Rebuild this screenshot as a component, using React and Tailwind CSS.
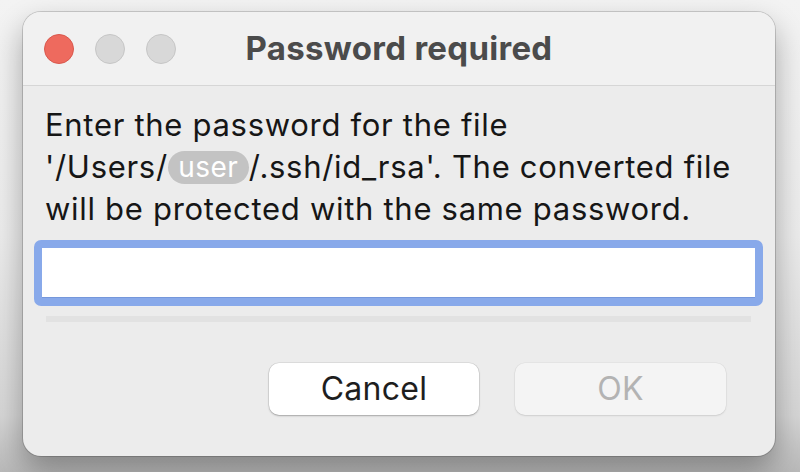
export default function App() {
  return (
    <div
      className="w-[800px] h-[472px] overflow-hidden bg-[linear-gradient(180deg,#f3f3f3_0%,#ececec_50%,#d6d6d6_88%,#b9b9b9_100%)] pt-[12px] pl-[23px]"
      style={{ fontFamily: 'Inter, "Noto Sans", sans-serif' }}
    >
      <div className="w-[752px] h-[444px] rounded-[18px] bg-[#ececec] shadow-[0_0_0_1px_rgba(0,0,0,0.16),0_14px_30px_rgba(0,0,0,0.32)] overflow-hidden flex flex-col">
        {/* Title bar */}
        <div className="relative h-[74px] shrink-0 bg-[#f1f1f1] border-b border-[#d6d6d6] flex items-center">
          <div className="flex items-center gap-[21px] pl-[21px]">
            <div className="w-[30px] h-[30px] rounded-full bg-[#ee6a5e] border border-[#d9584d]" />
            <div className="w-[30px] h-[30px] rounded-full bg-[#d8d8d8] border border-[#c6c6c6]" />
            <div className="w-[30px] h-[30px] rounded-full bg-[#d8d8d8] border border-[#c6c6c6]" />
          </div>
          <div className="absolute inset-0 flex items-center justify-center text-[33px] font-bold text-[#4b4b4b] tracking-[0.3px]">
            Password required
          </div>
        </div>
        {/* Body */}
        <div className="flex flex-col pt-[18px] px-[11px]">
          <div className="pl-[11px] text-[31px] leading-[42px] tracking-[0.7px] text-[#161616]">
            <div>Enter the password for the file</div>
            <div className="flex items-center">
              <span>'/Users/</span>
              <span className="inline-flex items-center justify-center h-[33px] w-[81px] rounded-full bg-[#c3c3c3] text-white text-[28px] tracking-[0.5px] leading-none">
                user
              </span>
              <span>/.ssh/id_rsa'. The converted file</span>
            </div>
            <div>will be protected with the same password.</div>
          </div>
          <div className="mt-[10px] h-[66px] w-[729px] rounded-[7px] bg-[#88a9ea] p-[8px]">
            <div className="h-full w-full bg-white shadow-[inset_0_-1px_0_#7597db]" />
          </div>
          <div className="mt-[10px] ml-[12px] h-[6px] w-[705px] bg-[#e2e2e2]" />
          <div className="mt-[41px] flex justify-end gap-[36px] pr-[38px]">
            <button className="w-[210px] h-[52px] rounded-[10px] bg-white shadow-[0_0_0_0.5px_rgba(0,0,0,0.12),0_1px_2px_rgba(0,0,0,0.25)] text-[32px] tracking-[0.3px] text-[#1e1e1e]">
              Cancel
            </button>
            <button className="w-[211px] h-[52px] rounded-[10px] bg-[#f4f4f4] shadow-[0_0_0_0.5px_rgba(0,0,0,0.06),0_1px_2px_rgba(0,0,0,0.1)] text-[32px] tracking-[0.3px] text-[#b3b3b3]">
              OK
            </button>
          </div>
        </div>
      </div>
    </div>
  );
}
